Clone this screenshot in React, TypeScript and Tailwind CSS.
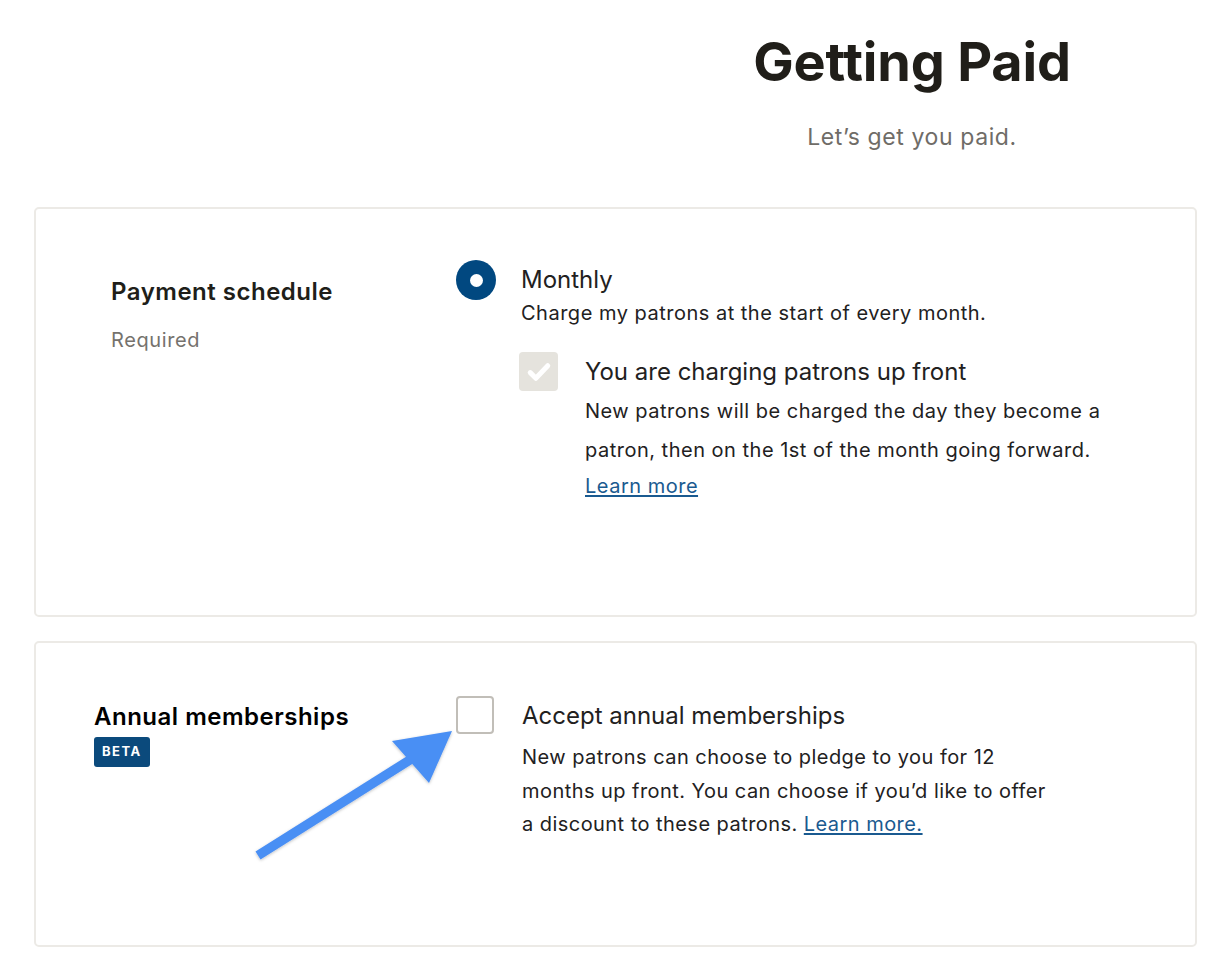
import React from 'react';

const Radio: React.FC = () => (
    <div className="flex h-10 w-10 shrink-0 items-center justify-center rounded-full bg-[#014880]">
        <div className="h-[13px] w-[13px] rounded-full bg-white" />
    </div>
);

const CheckedDisabled: React.FC = () => (
    <div className="flex h-[39px] w-[39px] shrink-0 items-center justify-center rounded-[4px] bg-[#e5e3dd]">
        <svg viewBox="0 0 24 24" className="h-[30px] w-[30px]" fill="none" stroke="white" strokeWidth={4} strokeLinecap="round" strokeLinejoin="round">
            <path d="M5 12.5l4.5 4.5L19 7" />
        </svg>
    </div>
);

const Arrow: React.FC = () => (
    <svg className="pointer-events-none absolute left-0 top-0" width="1216" height="970" viewBox="0 0 1216 970">
        <defs>
            <filter id="shadow" x="-20%" y="-20%" width="140%" height="140%">
                <feDropShadow dx="0" dy="1" stdDeviation="1.5" floodColor="#000" floodOpacity="0.25" />
            </filter>
        </defs>
        <g filter="url(#shadow)" fill="#4a8ff4" stroke="none">
            <path d="M255.5 851.5 L412 753 L417 761 L260.5 859.5 Z" />
            <path d="M452 731 L392 741 L429 783 Z" />
        </g>
    </svg>
);

export default function App() {
    return (
        <div className="relative min-h-[970px] w-[1216px] bg-white font-['Inter',sans-serif] text-[#22211e]">
            <div className="ml-auto w-1/2 pt-[28px] text-center">
                <h1 className="text-[54px] font-bold leading-[68px] tracking-[-0.2px] text-[#201e19]">Getting Paid</h1>
                <p className="mt-[26px] text-[23px] leading-[30px] tracking-[0.6px] text-[#6f6c67]">Let’s get you paid.</p>
            </div>

            <div className="pl-[34px] pr-[19px] pt-[55px]">
                <div className="flex h-[410px] rounded-[5px] border-2 border-[#eceae6] pt-[51px]">
                    <div className="w-[420px] shrink-0 pl-[75px] pt-[17px]">
                        <h2 className="text-[24px] font-semibold leading-[30px] tracking-[0.5px] text-[#201e19]">Payment schedule</h2>
                        <p className="mt-[19px] text-[20px] leading-[28px] tracking-[0.6px] text-[#75726d]">Required</p>
                    </div>
                    <div className="flex gap-[25px]">
                        <Radio />
                        <div className="pt-[4px]">
                            <div className="text-[24px] leading-[32px]">Monthly</div>
                            <div className="mt-[3px] text-[20px] leading-[28px] tracking-[0.5px]">Charge my patrons at the start of every month.</div>
                            <div className="-ml-[2px] mt-[25px] flex gap-[27px]">
                                <CheckedDisabled />
                                <div className="pt-[4px]">
                                    <div className="text-[24px] leading-[32px]">You are charging patrons up front</div>
                                    <div className="mt-[4px] text-[20px] leading-[39px] tracking-[0.5px]">
                                        New patrons will be charged the day they become a<br />
                                        patron, then on the 1st of the month going forward.
                                    </div>
                                    <a href="#" className="block text-[20px] leading-[32px] tracking-[0.5px] text-[#1a5a90] underline underline-offset-2">Learn more</a>
                                </div>
                            </div>
                        </div>
                    </div>
                </div>

                <div className="mt-[24px] flex h-[306px] rounded-[5px] border-2 border-[#eceae6] pt-[53px]">
                    <div className="w-[420px] shrink-0 pl-[58px] pt-[6px]">
                        <h2 className="text-[24px] font-semibold leading-[30px] tracking-[0.5px] text-black">Annual memberships</h2>
                        <span className="mt-[5px] inline-flex h-[30px] items-center rounded-[3px] bg-[#0b4a7c] px-[8px] text-[13px] font-bold tracking-[1.5px] text-white">BETA</span>
                    </div>
                    <div className="flex gap-[28px]">
                        <div className="h-[38px] w-[38px] shrink-0 rounded-[4px] border-2 border-[#c1beb8] bg-white" />
                        <div className="pt-[4px]">
                            <div className="text-[24px] leading-[32px]">Accept annual memberships</div>
                            <div className="mt-[9px] text-[20px] leading-[33.5px] tracking-[0.45px]">
                                New patrons can choose to pledge to you for 12<br />
                                months up front. You can choose if you’d like to offer<br />
                                a discount to these patrons.{' '}
                                <a href="#" className="text-[#1a5a90] underline underline-offset-2">Learn more.</a>
                            </div>
                        </div>
                    </div>
                </div>
            </div>

            <Arrow />
        </div>
    );
}
